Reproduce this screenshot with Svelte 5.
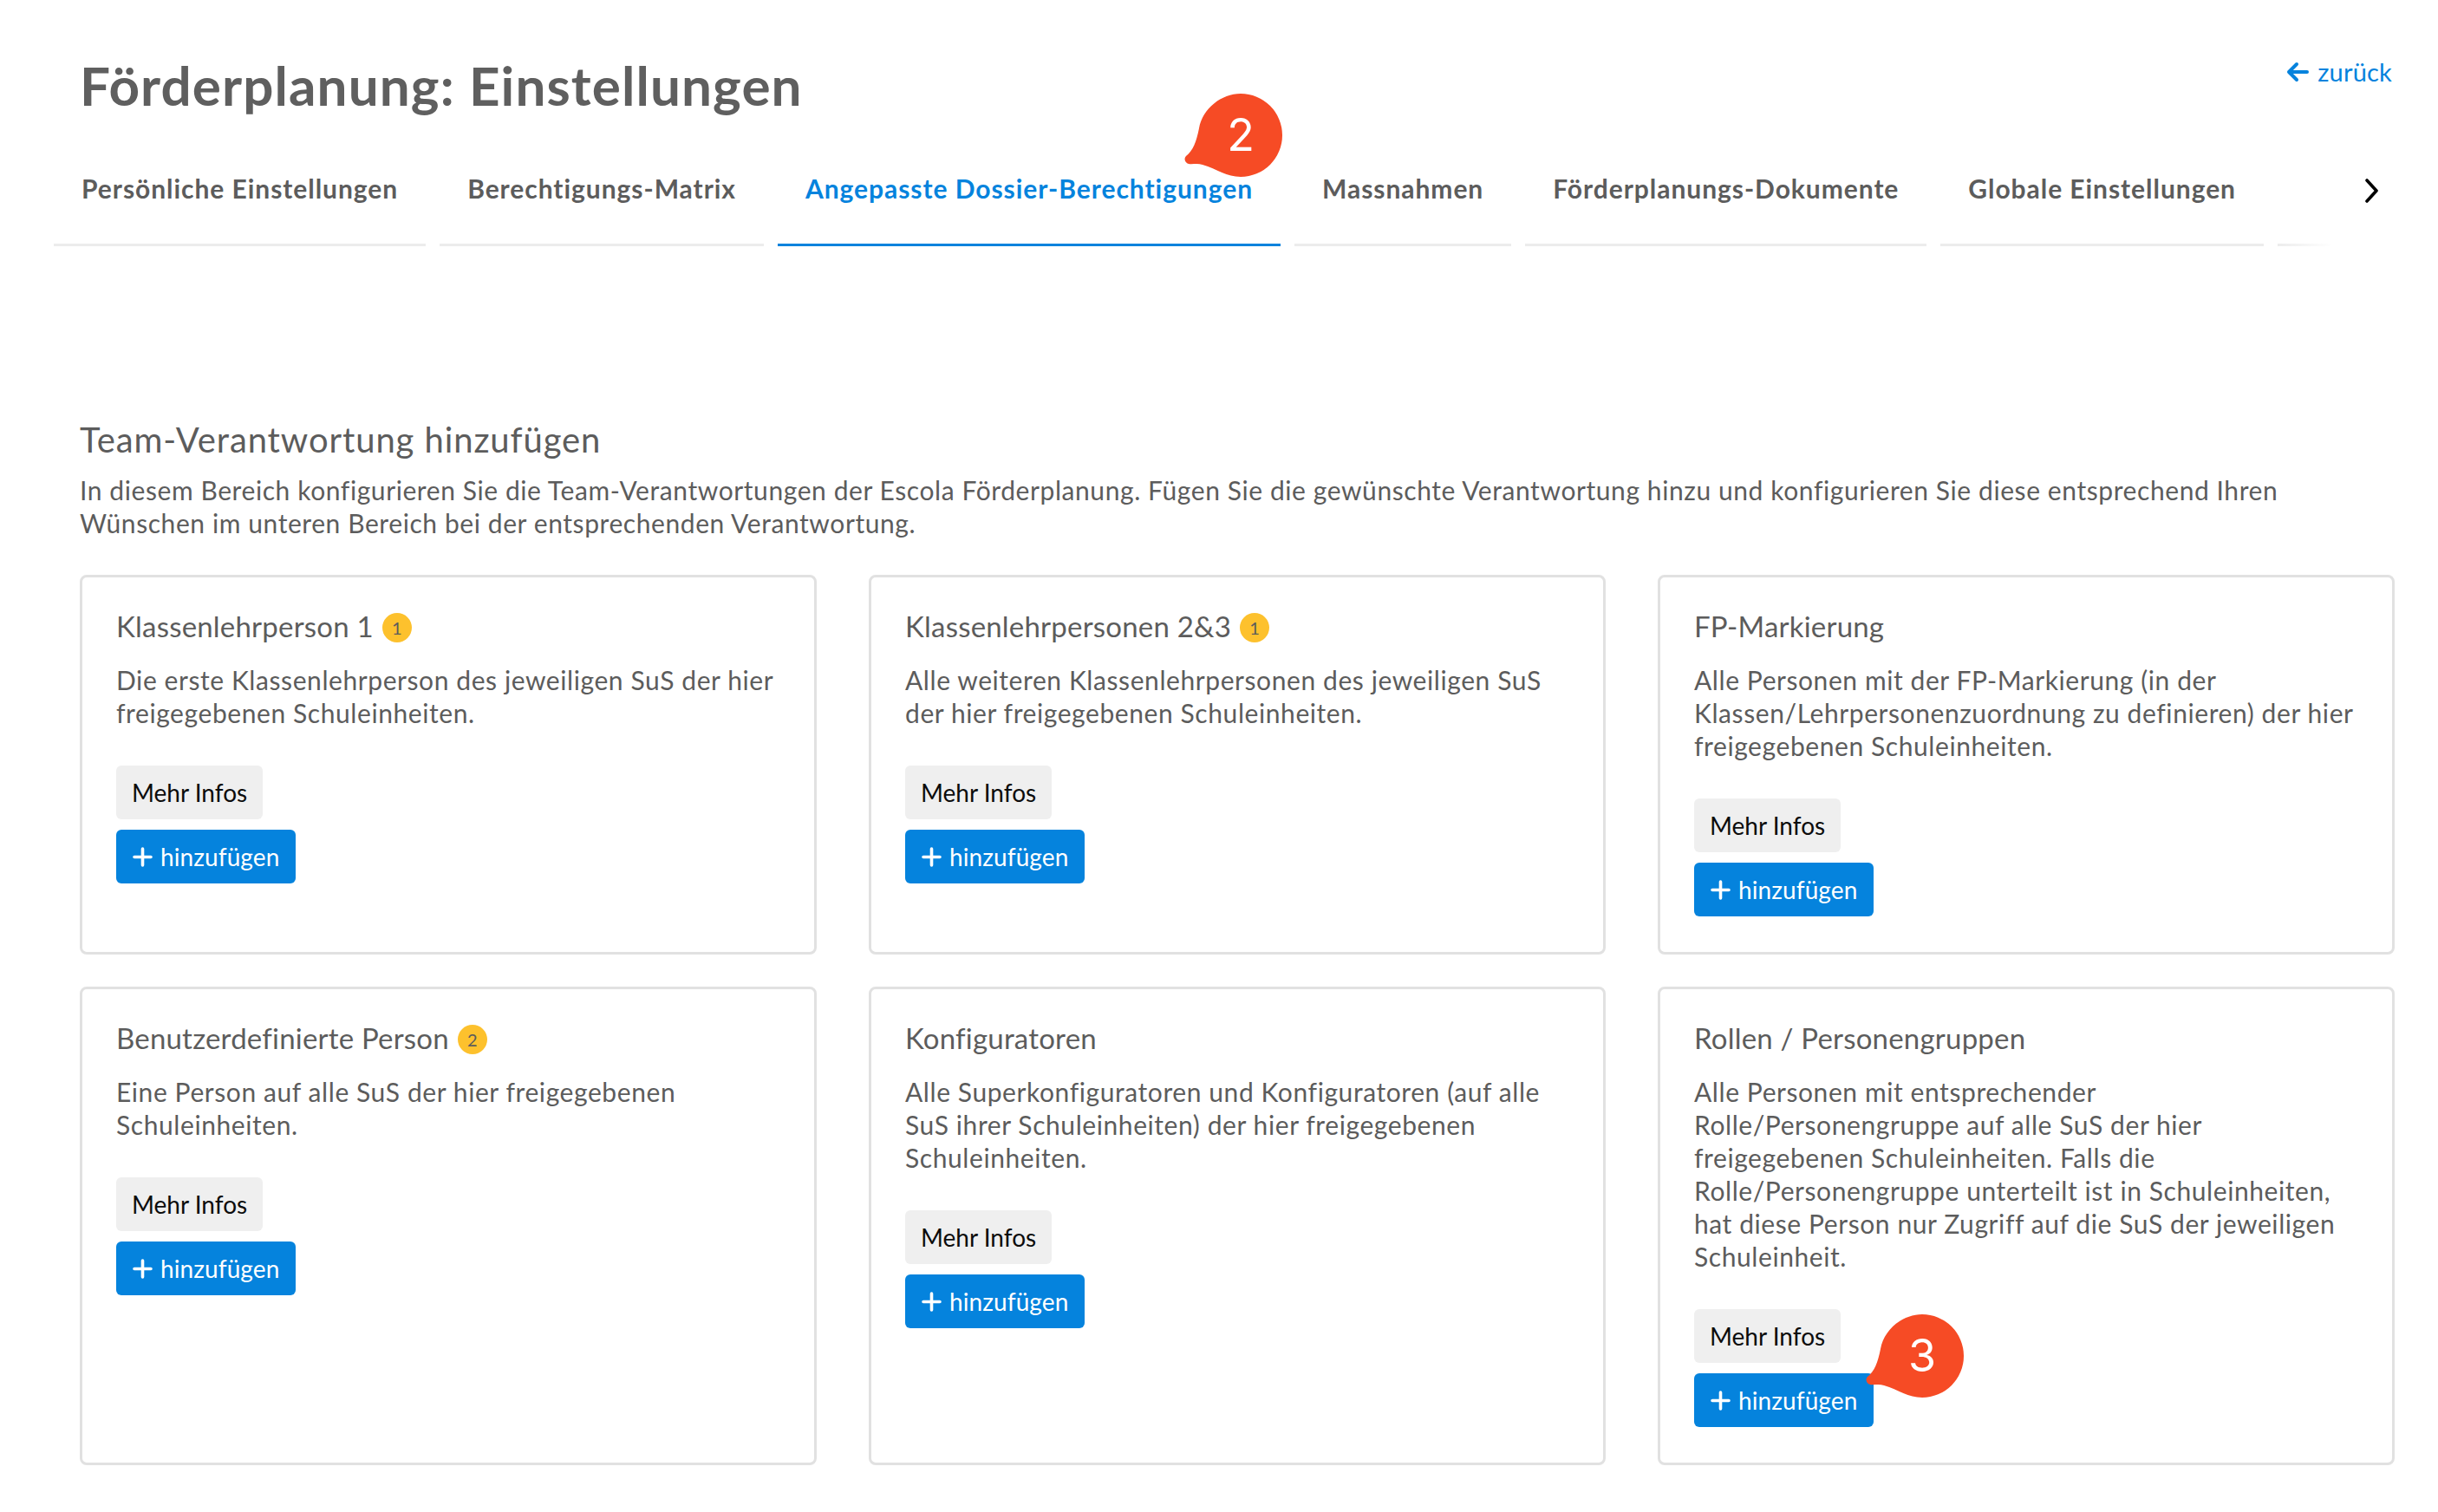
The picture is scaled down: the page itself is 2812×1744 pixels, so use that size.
<script>
    const tabs = [
        { label: 'Persönliche Einstellungen' },
        { label: 'Berechtigungs-Matrix' },
        { label: 'Angepasste Dossier-Berechtigungen', active: true },
        { label: 'Massnahmen' },
        { label: 'Förderplanungs-Dokumente' },
        { label: 'Globale Einstellungen' }
    ];

    const cards = [
        {
            title: 'Klassenlehrperson 1',
            badge: 1,
            lines: ['Die erste Klassenlehrperson des jeweiligen SuS der hier', 'freigegebenen Schuleinheiten.']
        },
        {
            title: 'Klassenlehrpersonen 2&3',
            badge: 1,
            lines: ['Alle weiteren Klassenlehrpersonen des jeweiligen SuS', 'der hier freigegebenen Schuleinheiten.']
        },
        {
            title: 'FP-Markierung',
            lines: [
                'Alle Personen mit der FP-Markierung (in der',
                'Klassen/Lehrpersonenzuordnung zu definieren) der hier',
                'freigegebenen Schuleinheiten.'
            ]
        },
        {
            title: 'Benutzerdefinierte Person',
            badge: 2,
            lines: ['Eine Person auf alle SuS der hier freigegebenen', 'Schuleinheiten.']
        },
        {
            title: 'Konfiguratoren',
            lines: [
                'Alle Superkonfiguratoren und Konfiguratoren (auf alle',
                'SuS ihrer Schuleinheiten) der hier freigegebenen',
                'Schuleinheiten.'
            ]
        },
        {
            title: 'Rollen / Personengruppen',
            lines: [
                'Alle Personen mit entsprechender',
                'Rolle/Personengruppe auf alle SuS der hier',
                'freigegebenen Schuleinheiten. Falls die',
                'Rolle/Personengruppe unterteilt ist in Schuleinheiten,',
                'hat diese Person nur Zugriff auf die SuS der jeweiligen',
                'Schuleinheit.'
            ]
        }
    ];
</script>

{#snippet bubble(n, cls)}
    <div class="bubble {cls}">
        <svg width="114" height="98" viewBox="0 0 114 98">
            <path d="M66 1a48 48 0 1 1 0 96c-16 0-27-9-44-14-6-2-12 0-16-1-4-1-6-6-3-9 8-6 12-17 15-32C22 18 44 1 66 1z" fill="#f64b25" />
        </svg>
        <span>{n}</span>
    </div>
{/snippet}

<div class="page">
    <header class="head">
        <h1>Förderplanung: Einstellungen</h1>
        <a class="back" href="#back">
            <svg width="26" height="24" viewBox="0 0 26 24" fill="none" stroke="#0583dd" stroke-width="4" stroke-linecap="round" stroke-linejoin="round">
                <path d="M24 12H3M12 3l-9 9 9 9" />
            </svg>
            zurück
        </a>
    </header>

    <nav class="tabs">
        {#each tabs as tab}
            <a class="tab" class:active={tab.active} href="#tab">{tab.label}</a>
        {/each}
        <span class="tab-rest"></span>
        <button class="next" aria-label="weiter">
            <svg width="18" height="28" viewBox="0 0 18 28" fill="none" stroke="#000" stroke-width="3.6" stroke-linecap="round" stroke-linejoin="round">
                <path d="M3 2l11 12L3 26" />
            </svg>
        </button>
    </nav>

    <section class="intro">
        <h2>Team-Verantwortung hinzufügen</h2>
        <p>
            In diesem Bereich konfigurieren Sie die Team-Verantwortungen der Escola Förderplanung. Fügen Sie die gewünschte Verantwortung hinzu und konfigurieren Sie diese entsprechend Ihren<br />
            Wünschen im unteren Bereich bei der entsprechenden Verantwortung.
        </p>
    </section>

    <section class="grid">
        {#each cards as card}
            <article class="card">
                <h3>
                    {card.title}
                    {#if card.badge}<span class="badge">{card.badge}</span>{/if}
                </h3>
                <p>
                    {#each card.lines as line, i}
                        {#if i > 0}<br />{/if}{line}
                    {/each}
                </p>
                <div class="actions">
                    <button class="btn info">Mehr Infos</button>
                    <button class="btn add">
                        <svg width="23" height="23" viewBox="0 0 23 23" stroke="#fff" stroke-width="3.6" stroke-linecap="round">
                            <path d="M11.5 2v19M2 11.5h19" />
                        </svg>
                        hinzufügen
                    </button>
                </div>
            </article>
        {/each}
    </section>

    {@render bubble(2, 'b2')}
    {@render bubble(3, 'b3')}
</div>

<style>
    :global(body) {
        margin: 0;
        background: #fff;
    }

    .page {
        position: relative;
        width: 2812px;
        height: 1744px;
        padding: 0 50px 0 92px;
        box-sizing: border-box;
        font-family: 'Lato', 'Noto Sans', sans-serif;
        font-size: 30px;
        letter-spacing: 0.58px;
        line-height: 38px;
        color: #5c5c5c;
        overflow: hidden;
    }

    .head {
        display: flex;
        justify-content: space-between;
        align-items: flex-start;
        height: 176px;
    }

    h1 {
        margin: 62px 0 0;
        font-size: 62px;
        letter-spacing: 1.1px;
        line-height: 72px;
        font-weight: 700;
        color: #5f5f5f;
    }

    .back {
        display: flex;
        align-items: center;
        gap: 10px;
        margin-top: 64px;
        margin-right: 3px;
        color: #0583dd;
        font-size: 29px;
        letter-spacing: 0.2px;
        text-decoration: none;
    }

    .tabs {
        display: flex;
        gap: 16px;
        height: 108px;
        margin-left: -30px;
        position: relative;
    }

    .tab {
        display: block;
        padding: 22px 32px 0;
        box-sizing: border-box;
        height: 108px;
        border-bottom: 3px solid #ececec;
        color: #5c5c5c;
        font-weight: 700;
        letter-spacing: 0.95px;
        text-decoration: none;
        white-space: nowrap;
    }

    .tab.active {
        color: #0583dd;
        border-bottom-color: #0583dd;
    }

    .tab-rest {
        flex: 0 0 62px;
        height: 108px;
        box-sizing: border-box;
        border-bottom: 3px solid transparent;
        border-image: linear-gradient(90deg, #ececec, #fff) 1;
    }

    .next {
        position: absolute;
        left: 2665px;
        top: 30px;
        padding: 0;
        border: 0;
        background: none;
        line-height: 0;
    }

    .intro {
        margin-top: 200px;
    }

    h2 {
        margin: 0;
        font-size: 40px;
        letter-spacing: 0.9px;
        line-height: 46px;
        font-weight: 400;
    }

    .intro p {
        margin: 16px 0 0;
    }

    .grid {
        display: grid;
        grid-template-columns: repeat(3, 850px);
        gap: 37px 60px;
        margin-top: 41px;
    }

    .card {
        box-sizing: border-box;
        padding: 35px 39px 41px;
        border: 3px solid #e1e1e1;
        border-radius: 8px;
    }

    h3 {
        display: flex;
        align-items: center;
        gap: 10px;
        margin: 0;
        font-size: 33px;
        letter-spacing: 0.2px;
        line-height: 42px;
        font-weight: 400;
    }

    .badge {
        display: inline-flex;
        align-items: center;
        justify-content: center;
        width: 34px;
        height: 34px;
        border-radius: 50%;
        margin-top: 3px;
        background: #fdc12d;
        font-size: 20px;
        letter-spacing: 0;
        line-height: 1;
    }

    .card p {
        margin: 22px 0 0;
    }

    .actions {
        display: flex;
        flex-direction: column;
        align-items: flex-start;
        gap: 12px;
        margin-top: 42px;
    }

    .btn {
        display: flex;
        align-items: center;
        gap: 9px;
        height: 62px;
        padding: 0 19px;
        border: 0;
        border-radius: 6px;
        font: inherit;
        font-size: 28px;
        letter-spacing: 0;
    }

    .info {
        padding: 0 18px;
        background: #efefef;
        color: #0c0c0c;
    }

    .add {
        background: #0583dd;
        color: #fff;
        letter-spacing: 0.1px;
    }

    .bubble {
        position: absolute;
        width: 114px;
        height: 98px;
    }

    .bubble svg {
        display: block;
    }

    .bubble span {
        position: absolute;
        left: 18px;
        right: 0;
        top: 0;
        text-align: center;
        font-family: 'Inter', sans-serif;
        font-size: 52px;
        letter-spacing: 0;
        line-height: 98px;
        color: #fff;
    }

    .b2 {
        left: 1365px;
        top: 107px;
    }

    .b3 {
        left: 2151px;
        top: 1515px;
    }
</style>
